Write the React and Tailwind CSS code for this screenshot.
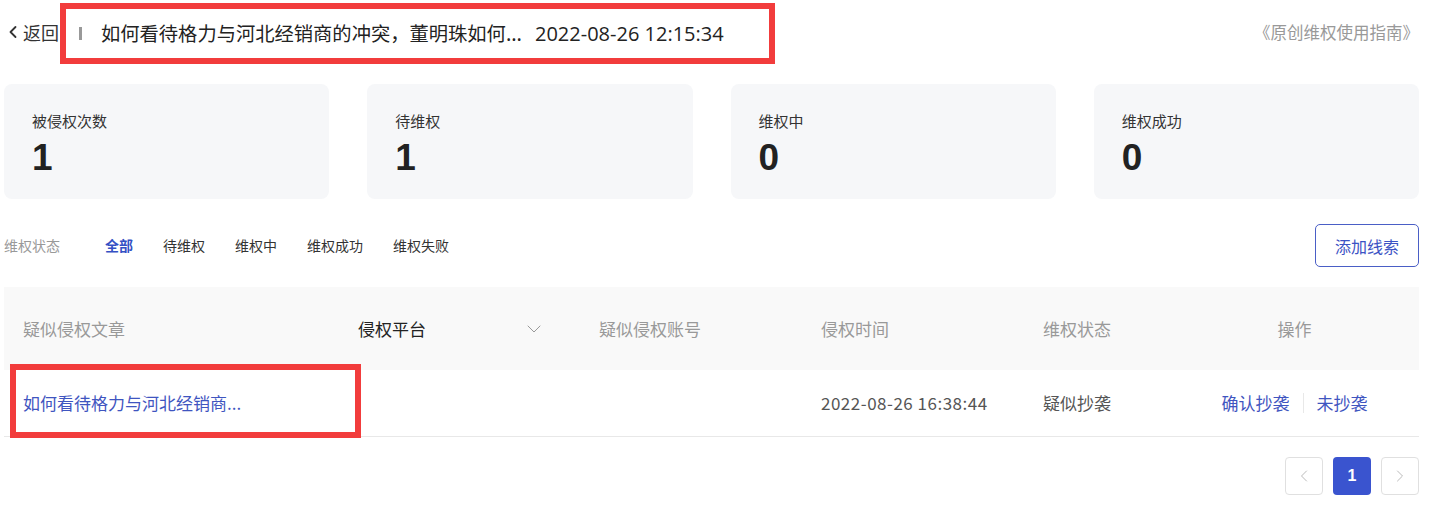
import { ChevronLeft, ChevronRight, ChevronDown } from "lucide-react";

const stats = [
  { label: "被侵权次数", value: 1 },
  { label: "待维权", value: 1 },
  { label: "维权中", value: 0 },
  { label: "维权成功", value: 0 },
];

const tabs = ["全部", "待维权", "维权中", "维权成功", "维权失败"];

export default function App() {
  return (
    <div
      className="w-[1429px] h-[511px] bg-white pl-[4px] pr-[10px] text-[#333]"
      style={{ fontFamily: '"Noto Sans CJK SC", "Noto Sans", sans-serif' }}
    >
      {/* header */}
      <div className="flex items-start h-[64px]">
        <div className="flex items-center text-[18px] text-[#333] w-[56px] h-[64px]">
          <ChevronLeft size={20} strokeWidth={2.2} className="-ml-[1px]" />
          <span>返回</span>
        </div>
        <div className="flex items-center h-[61px] w-[715px] mt-[3px] border-[6px] border-[#f23c3c] pl-[13px]">
          <span className="w-[3px] h-[13px] bg-[#999] mr-[19px]" />
          <span className="text-[19.3px] text-[#222]">如何看待格力与河北经销商的冲突，董明珠如何...</span>
          <span className="text-[20px] text-[#222] ml-[13px]" style={{ fontFamily: '"Open Sans", "Noto Sans", sans-serif' }}>
            2022-08-26 12:15:34
          </span>
        </div>
        <div className="ml-auto h-[64px] flex items-center text-[16.5px] text-[#999]">《原创维权使用指南》</div>
      </div>

      {/* stat cards */}
      <div className="grid grid-cols-4 gap-[38px] mt-[20px]">
        {stats.map((s) => (
          <div key={s.label} className="h-[115px] rounded-[8px] bg-[#f6f7f9] pl-[28px] pt-[27px]">
            <div className="text-[15px] text-[#333] leading-[20px]">{s.label}</div>
            <div
              className="text-[37px] font-bold text-[#222] leading-[40px] mt-[7px]"
              style={{ fontFamily: '"Liberation Sans", Arial, sans-serif' }}
            >
              {s.value}
            </div>
          </div>
        ))}
      </div>

      {/* filters */}
      <div className="flex items-center mt-[25px] h-[43px]">
        <span className="text-[14px] text-[#999] w-[101px]">维权状态</span>
        <div className="flex items-center text-[14px] text-[#333]">
          {tabs.map((t, i) => (
            <span
              key={t}
              className={
                i === 0
                  ? "text-[#3450c4] font-bold mr-[30px]"
                  : "mr-[30px]"
              }
            >
              {t}
            </span>
          ))}
        </div>
        <button className="ml-auto w-[104px] h-[43px] rounded-[5px] border border-[#4a5ec6] text-[16px] text-[#3b52c4]">
          添加线索
        </button>
      </div>

      {/* table */}
      <div className="mt-[20px]">
        <div className="flex items-center h-[83px] bg-[#f9f9f9] text-[17px] text-[#999]">
          <div className="w-[335px] pl-[19px]">疑似侵权文章</div>
          <div className="w-[241px] pl-[19px] flex items-center text-[#222]">
            <span>侵权平台</span>
            <ChevronDown size={24} strokeWidth={1} className="ml-auto mr-[34px] text-[#999]" />
          </div>
          <div className="w-[222px] pl-[19px]">疑似侵权账号</div>
          <div className="w-[222px] pl-[19px]">侵权时间</div>
          <div className="w-[146px] pl-[19px]">维权状态</div>
          <div className="flex-1 text-center">操作</div>
        </div>
        <div className="flex items-center h-[67px] border-b border-[#e8e8e8] text-[17px] text-[#555]">
          <div className="relative w-[335px] pl-[19px] text-[#3f55c0] h-full flex items-center">
            如何看待格力与河北经销商...
            <div className="absolute left-[6px] top-[-6px] w-[351px] h-[74px] border-[6px] border-[#f23c3c]" />
          </div>
          <div className="w-[241px]" />
          <div className="w-[222px]" />
          <div className="w-[222px] pl-[19px] tracking-[0.5px]">2022-08-26 16:38:44</div>
          <div className="w-[146px] pl-[19px]">疑似抄袭</div>
          <div className="flex-1 flex items-center justify-center text-[#3f55c0]">
            <span>确认抄袭</span>
            <span className="w-px h-[20px] bg-[#e8e8e8] mx-[13px]" />
            <span>未抄袭</span>
          </div>
        </div>
      </div>

      {/* pagination */}
      <div className="flex justify-end gap-[10px] mt-[20px]">
        <div className="w-[38px] h-[38px] rounded-[4px] border border-[#e0e0e0] flex items-center justify-center text-[#bbb]">
          <ChevronLeft size={20} strokeWidth={1.2} />
        </div>
        <div
          className="w-[38px] h-[38px] rounded-[4px] bg-[#3a54cf] text-white font-bold text-[16px] flex items-center justify-center"
          style={{ fontFamily: '"Liberation Sans", Arial, sans-serif' }}
        >
          1
        </div>
        <div className="w-[38px] h-[38px] rounded-[4px] border border-[#e0e0e0] flex items-center justify-center text-[#bbb]">
          <ChevronRight size={20} strokeWidth={1.2} />
        </div>
      </div>
    </div>
  );
}
